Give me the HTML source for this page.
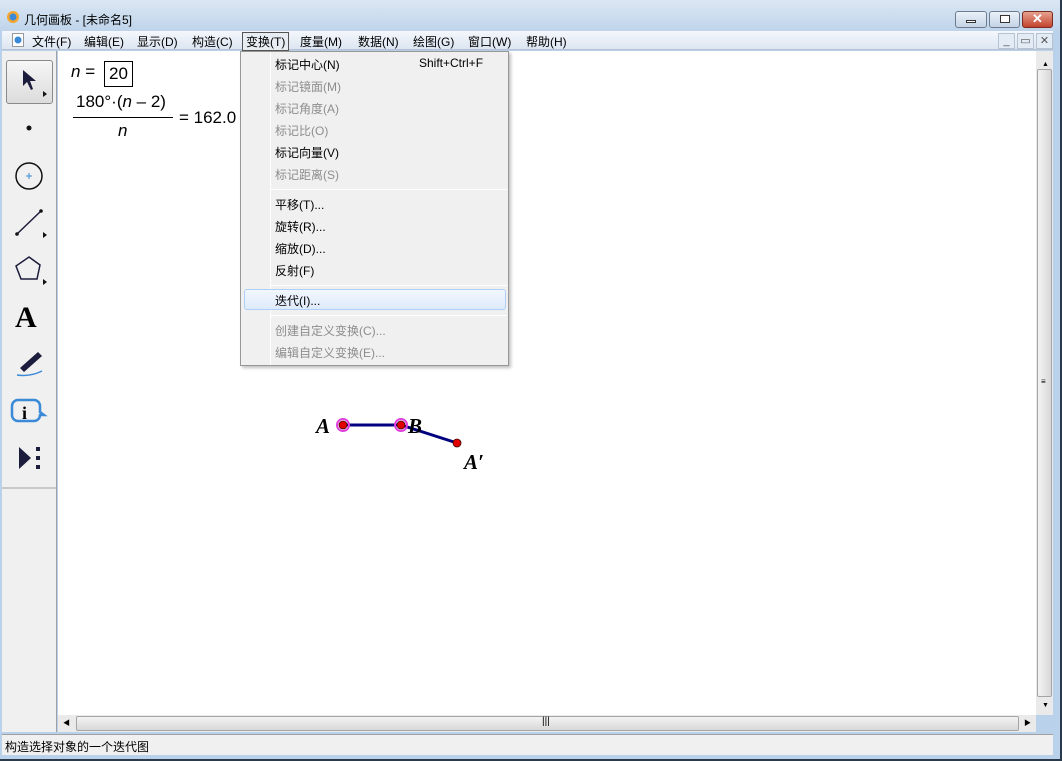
<!DOCTYPE html>
<html><head><meta charset="utf-8"><style>
*{margin:0;padding:0;box-sizing:border-box}
body{width:1062px;height:761px;position:relative;overflow:hidden;background:#b9d1ea;font-family:"Liberation Sans","Noto Sans CJK SC",sans-serif;font-size:12px;color:#000}
.abs{position:absolute}
#title{left:0;top:0;width:1062px;height:31px;background:linear-gradient(#dbe7f4,#bfd4ea)}
#menubar{left:2px;top:31px;width:1051px;height:19px;background:linear-gradient(#f4f7fc,#dde6f2);border-bottom:1px solid #b7c3d3}
.mi{position:absolute;top:2px;font-size:12px}
#tool{left:2px;top:51px;width:55px;height:681px;background:#f0f0f0;border-right:1px solid #a0a0a0}
#canvas{left:58px;top:51px;width:978px;height:664px;background:#fff}
#vs{left:1036px;top:51px;width:17px;height:664px;background:#eaeaea}
#hs{left:58px;top:715px;width:978px;height:17px;background:#eaeaea}
#status{left:2px;top:734px;width:1051px;height:21px;background:#f0f0f0;border-top:1px solid #a0a0a0}
#menu{left:240px;top:51px;width:269px;height:315px;background:#f0f0f0;border:1px solid #979797;box-shadow:2px 2px 3px rgba(0,0,0,.25)}
.it{position:absolute;left:34px;font-size:12px}
.dis{color:#8d8d8d}
.sep{position:absolute;left:30px;width:236px;height:1px;background:#d7d7d7;border-bottom:1px solid #fff}
.wb{position:absolute;top:11px;height:17px;border:1px solid #6d7c90;border-radius:3px;background:linear-gradient(#eaf1f9,#c4d4e6)}
.mb{position:absolute;top:33px;width:17px;height:16px;border:1px solid #b6c3d3;background:#e3ebf5;font-size:11px;text-align:center;color:#555;line-height:14px}
</style></head><body>
<div id="title" class="abs">
 <svg class="abs" style="left:6px;top:10px" width="14" height="14"><circle cx="7" cy="7" r="6" fill="#f3a530"/><circle cx="7" cy="7" r="3.5" fill="#3a8ad8"/></svg>
 <div class="abs" style="left:24px;top:11px;font-size:12px">几何画板 - [未命名5]</div>
 <div class="wb" style="left:955px;width:32px"><div style="margin:8px auto 0;width:10px;height:3px;background:#fff;border:1px solid #333"></div></div>
 <div class="wb" style="left:989px;width:31px"><div style="margin:3px auto 0;width:10px;height:8px;border:1px solid #333;background:#fff"></div></div>
 <div class="wb" style="left:1022px;width:31px;background:linear-gradient(#e6a290,#c3432c);border-color:#7a2b20;color:#fff;text-align:center;font-weight:bold;font-size:13px;line-height:14px">✕</div>
</div>
<div class="abs" style="left:1060px;top:0;width:2px;height:761px;background:#2b3a4a"></div>
<div class="abs" style="left:0;top:759px;width:1062px;height:2px;background:#2b3a4a"></div>
<div id="menubar" class="abs">
 <svg class="abs" style="left:10px;top:2px" width="12" height="14"><rect x="0.5" y="0.5" width="11" height="13" fill="#fff" stroke="#999"/><circle cx="6" cy="7" r="3.5" fill="#3a8ad8"/></svg>
 <span class="mi" style="left:30px">文件(F)</span><span class="mi" style="left:82px">编辑(E)</span><span class="mi" style="left:135px">显示(D)</span><span class="mi" style="left:190px">构造(C)</span>
 <span class="mi" style="left:240px;top:1px;border:1px solid #555;padding:0 3px;background:#e8edf3">变换(T)</span>
 <span class="mi" style="left:298px">度量(M)</span><span class="mi" style="left:356px">数据(N)</span><span class="mi" style="left:411px">绘图(G)</span><span class="mi" style="left:466px">窗口(W)</span><span class="mi" style="left:524px">帮助(H)</span>
</div>
<div class="mb" style="left:998px">_</div><div class="mb" style="left:1017px">▭</div><div class="mb" style="left:1036px">✕</div>
<div id="tool" class="abs">
 <div class="abs" style="left:4px;top:9px;width:47px;height:44px;border:1px solid #8a8a8a;border-radius:3px;background:linear-gradient(#f6f6f6,#dcdcdc)"></div>
 <svg class="abs" style="left:0;top:0" width="55" height="450">
  <path d="M21 19 L21 35 L25 31 L29 39 L31 38 L28 30 L34 30 Z" fill="#1c1c3c"/>
  <path d="M41 40 l4 3 l-4 3z M41 181 l4 3 l-4 3z M41 228 l4 3 l-4 3z" fill="#111"/>
  <circle cx="27" cy="77" r="2.5" fill="#111"/>
  <circle cx="27" cy="125" r="13" fill="none" stroke="#111" stroke-width="1.5"/>
  <path d="M24 125h6M27 122v6" stroke="#3a8ad8"/>
  <path d="M15 183 L39 160" stroke="#1c1c3c" stroke-width="1.5"/><circle cx="15" cy="183" r="1.8" fill="#111"/><circle cx="39" cy="160" r="1.8" fill="#111"/>
  <path d="M27 206 L38 214 L35 228 L19 228 L14 215 Z" fill="none" stroke="#1c1c3c" stroke-width="1.5"/>
  <text x="13" y="276" font-family="Liberation Serif" font-weight="bold" font-size="30">A</text>
  <path d="M18 317 L36 301 L40 305 L22 321 Z" fill="#1c1c3c"/><path d="M15 324 Q28 326 40 320" stroke="#3a8ad8" stroke-width="1.5" fill="none"/>
  <path d="M16 349 h16 a6 6 0 0 1 6 6 v6 l4 3 h-4 a6 6 0 0 1 -6 6 h-16 a6 6 0 0 1 -6 -6 v-9 a6 6 0 0 1 6 -6z" fill="none" stroke="#3a8ad8" stroke-width="2.5"/>
  <text x="20" y="368" font-family="Liberation Serif" font-weight="bold" font-size="18">i</text>
  <path d="M17 396 L17 418 L29 407 Z" fill="#1c1c3c"/><rect x="34" y="396" width="4" height="4" fill="#1c1c3c"/><rect x="34" y="405" width="4" height="4" fill="#1c1c3c"/><rect x="34" y="414" width="4" height="4" fill="#1c1c3c"/>
  <path d="M0 437 H55" stroke="#a0a0a0"/>
 </svg>
</div>
<div id="canvas" class="abs">
 <div class="abs" style="left:13px;top:11px;font-size:17px"><i>n</i> = </div>
 <div class="abs" style="left:46px;top:10px;width:29px;height:26px;border:1px solid #000;font-size:17px;text-align:center;line-height:24px">20</div>
 <div class="abs" style="left:18px;top:41px;font-size:17px">180°·(<i>n</i> – 2)</div>
 <div class="abs" style="left:15px;top:66px;width:100px;height:1px;background:#000"></div>
 <div class="abs" style="left:60px;top:70px;font-size:17px"><i>n</i></div>
 <div class="abs" style="left:121px;top:57px;font-size:17px">= 162.0</div>
 <svg class="abs" style="left:0;top:0" width="978" height="664">
  <path d="M285 374 H343 L399 392" stroke="#00007f" stroke-width="3" fill="none"/>
  <circle cx="285" cy="374" r="6" fill="none" stroke="#e040e0" stroke-width="2"/><circle cx="343" cy="374" r="6" fill="none" stroke="#e040e0" stroke-width="2"/>
  <circle cx="285" cy="374" r="4" fill="#e00000" stroke="#400" stroke-width=".8"/><circle cx="343" cy="374" r="4" fill="#e00000" stroke="#400" stroke-width=".8"/><circle cx="399" cy="392" r="4" fill="#e00000" stroke="#400" stroke-width=".8"/>
  <g font-family="Liberation Serif" font-style="italic" font-weight="bold" font-size="21"><text x="258" y="382">A</text><text x="350" y="382">B</text><text x="406" y="418">A′</text></g>
 </svg>
</div>
<div id="vs" class="abs">
 <div class="abs" style="left:6px;top:10px;font-size:7px">▲</div>
 <div class="abs" style="left:1px;top:18px;width:15px;height:628px;border:1px solid #a5a5a5;border-radius:2px;background:linear-gradient(90deg,#f3f3f3,#d8d8d8)"></div>
 <div class="abs" style="left:5px;top:326px;font-size:8px">≡</div>
 <div class="abs" style="left:6px;top:651px;font-size:7px">▼</div>
</div>
<div id="hs" class="abs">
 <div class="abs" style="left:5px;top:3px;font-size:7px">◀</div>
 <div class="abs" style="left:18px;top:1px;width:943px;height:15px;border:1px solid #a5a5a5;border-radius:2px;background:linear-gradient(#f3f3f3,#d8d8d8)"></div>
 <div class="abs" style="left:484px;top:1px;font-size:10px">|||</div>
 <div class="abs" style="left:966px;top:3px;font-size:7px">▶</div>
</div>
<div id="status" class="abs"><div class="abs" style="left:3px;top:3px">构造选择对象的一个迭代图</div></div>
<div id="menu" class="abs">
 <div class="abs" style="left:29px;top:0;width:1px;height:313px;background:#e2e3e3;border-right:1px solid #fff"></div>
 <div class="it" style="top:4px">标记中心(N)</div><div class="abs" style="left:178px;top:4px">Shift+Ctrl+F</div>
 <div class="it dis" style="top:26px">标记镜面(M)</div>
 <div class="it dis" style="top:48px">标记角度(A)</div>
 <div class="it dis" style="top:70px">标记比(O)</div>
 <div class="it" style="top:92px">标记向量(V)</div>
 <div class="it dis" style="top:114px">标记距离(S)</div>
 <div class="sep" style="top:137px"></div>
 <div class="it" style="top:144px">平移(T)...</div>
 <div class="it" style="top:166px">旋转(R)...</div>
 <div class="it" style="top:188px">缩放(D)...</div>
 <div class="it" style="top:210px">反射(F)</div>
 <div class="sep" style="top:233px"></div>
 <div class="abs" style="left:3px;top:237px;width:262px;height:21px;border:1px solid #aecff7;border-radius:3px;background:linear-gradient(#f2f7fd,#dfeafa)"></div>
 <div class="it" style="top:240px">迭代(I)...</div>
 <div class="sep" style="top:263px"></div>
 <div class="it dis" style="top:270px">创建自定义变换(C)...</div>
 <div class="it dis" style="top:292px">编辑自定义变换(E)...</div>
</div>
</body></html>
